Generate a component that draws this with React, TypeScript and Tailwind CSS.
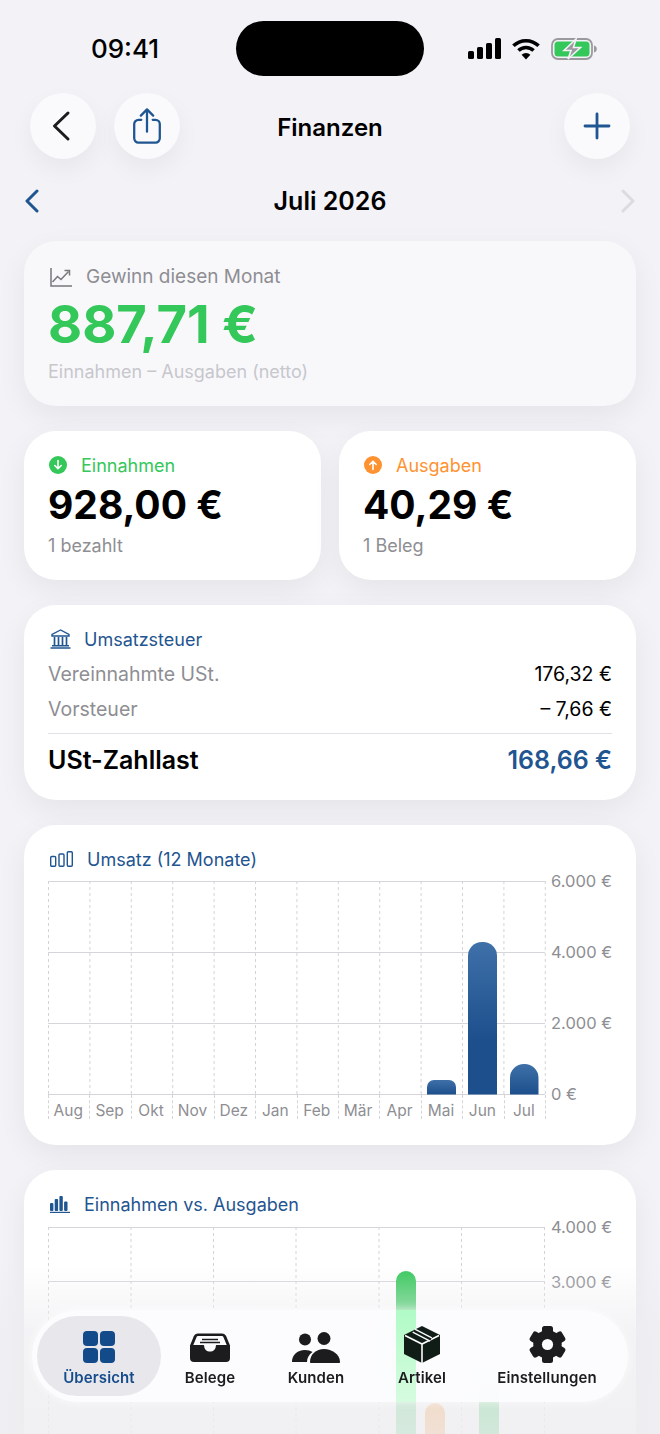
import type { ReactNode } from "react";

const months = ["Aug", "Sep", "Okt", "Nov", "Dez", "Jan", "Feb", "Mär", "Apr", "Mai", "Jun", "Jul"];

function roundedBar(x: number, w: number, top: number, bottom: number, r: number) {
  return `M${x} ${bottom}V${top + r}a${r} ${r} 0 0 1 ${r} ${-r}h${w - 2 * r}a${r} ${r} 0 0 1 ${r} ${r}V${bottom}Z`;
}

function Card({ children, className = "" }: { children: ReactNode; className?: string }) {
  return (
    <section className={`rounded-[32px] px-[24px] shadow-[0_10px_30px_rgba(0,0,0,0.06)] ${className}`}>
      {children}
    </section>
  );
}

function RoundButton({ children }: { children: ReactNode }) {
  return (
    <button className="flex h-[66px] w-[66px] items-center justify-center rounded-full bg-[#fafafd] shadow-[0_10px_24px_rgba(0,0,0,0.05)]">
      {children}
    </button>
  );
}

function StatusIcons() {
  return (
    <div className="flex items-center gap-[10px]">
      <svg width="33" height="21" viewBox="0 0 33 21" fill="#000">
        <rect x="0" y="13" width="6" height="8" rx="1.6" />
        <rect x="9" y="9" width="6" height="12" rx="1.6" />
        <rect x="18" y="5" width="6" height="16" rx="1.6" />
        <rect x="27" y="0" width="6" height="21" rx="1.6" />
      </svg>
      <svg width="30" height="22" viewBox="0 0 28 21" fill="none" stroke="#000" strokeWidth="3.4">
        <path d="M2 7.500a17 17 0 0 1 24 0" />
        <path d="M6.800 12a10.400 10.400 0 0 1 14.400 0" />
        <path d="M14 20.500l-4.200-4.400a6 6 0 0 1 8.400 0z" fill="#000" stroke="none" />
      </svg>
      <svg width="46" height="22" viewBox="0 0 46 22">
        <rect x="1" y="1" width="40" height="20" rx="6" fill="none" stroke="#9a9a9e" strokeWidth="1.800" />
        <rect x="3.500" y="3.500" width="35" height="15" rx="3.500" fill="#34c759" />
        <path d="M43 7.500c1.800.5 2.800 1.800 2.800 3.500s-1 3-2.800 3.500z" fill="#9a9a9e" />
        <path d="M25 1 13 12.500h7L17 21l12.500-11.500h-7z" fill="#9a9a9e" stroke="#f2f2f7" strokeWidth="1.600" />
      </svg>
    </div>
  );
}

function PlotLabels({ labels, rowClass }: { labels: string[]; rowClass: string }) {
  return (
    <div className={`ml-[5px] -mt-[12px] flex flex-col text-[16.5px] leading-[24px] text-[#8e8e93] ${rowClass}`}>
      {labels.map((l) => (
        <span key={l} className="whitespace-nowrap">
          {l}
        </span>
      ))}
    </div>
  );
}

function RevenueChart() {
  const cols = Array.from({ length: 13 }, (_, i) => 0.5 + i * 41.4);
  return (
    <div className="mt-[10px] flex">
      <div className="w-[498px] shrink-0">
        <svg width="498" height="214" className="block">
          <defs>
            <linearGradient id="rev" x1="0" y1="0" x2="0" y2="1">
              <stop offset="0" stopColor="#3f70a8" />
              <stop offset="0.65" stopColor="#1c4f8c" />
              <stop offset="1" stopColor="#1c4f8c" />
            </linearGradient>
            <linearGradient id="revS" x1="0" y1="0" x2="0" y2="1">
              <stop offset="0" stopColor="#3f70a8" />
              <stop offset="1" stopColor="#1c4f8c" />
            </linearGradient>
          </defs>
          {[0.5, 71.5, 142.5, 213.5].map((y) => (
            <line key={y} x1="0" x2="497" y1={y} y2={y} stroke="#d6d6da" />
          ))}
          {cols.map((x) => (
            <line key={x} x1={x} x2={x} y1="0" y2="213" stroke="#d4d4d8" strokeDasharray="3 3" />
          ))}
          <path d={roundedBar(379, 29, 199, 213.5, 7)} fill="url(#revS)" />
          <path d={roundedBar(420, 29, 61, 213.5, 14)} fill="url(#rev)" />
          <path d={roundedBar(462, 28.5, 183, 213.5, 14)} fill="url(#revS)" />
        </svg>
        <div className="grid grid-cols-12 border-r border-dashed border-[#d4d4d8]">
          {months.map((m) => (
            <div
              key={m}
              className="h-[24px] border-l border-dashed border-[#d4d4d8] pt-[4px] pr-[2px] text-center text-[15.5px] leading-[24px] text-[#8e8e93]"
            >
              {m}
            </div>
          ))}
        </div>
      </div>
      <PlotLabels labels={["6.000 €", "4.000 €", "2.000 €", "0 €"]} rowClass="h-[237px] justify-between" />
    </div>
  );
}

function CompareChart() {
  const cols = [0.5, 83, 165.5, 248, 331, 413.5, 496.5];
  return (
    <div className="mt-[11px] flex">
      <svg width="498" height="240" className="block shrink-0">
        <defs>
          <linearGradient id="inc" x1="0" y1="0" x2="0" y2="1">
            <stop offset="0" stopColor="#34c759" />
            <stop offset="1" stopColor="#5ad27d" />
          </linearGradient>
        </defs>
        {[0.5, 54.5, 109, 163.5, 218].map((y) => (
          <line key={y} x1="0" x2="497" y1={y} y2={y} stroke="#d6d6da" />
        ))}
        {cols.map((x) => (
          <line key={x} x1={x} x2={x} y1="0" y2="240" stroke="#d4d4d8" strokeDasharray="3 3" />
        ))}
        <path d={roundedBar(348, 20, 44, 240, 10)} fill="url(#inc)" />
        <path d={roundedBar(377, 20, 176, 240, 10)} fill="#ff9230" />
        <path d={roundedBar(431, 20, 150, 240, 10)} fill="#34c759" />
      </svg>
      <PlotLabels labels={["4.000 €", "3.000 €", "2.000 €"]} rowClass="gap-[30.5px]" />
    </div>
  );
}

function TabItem({
  label,
  width,
  active,
  children,
}: {
  label: string;
  width: string;
  active?: boolean;
  children: ReactNode;
}) {
  return (
    <div
      className={`relative z-10 flex flex-col items-center ${width} ${
        active ? "rounded-[40px] bg-[#e8e8ec] text-[#164c8b]" : "text-[#1c1c1e]"
      }`}
    >
      <div className="flex h-[49px] items-end justify-center pb-[2px]">{children}</div>
      <span className="mt-[3px] text-[15px] leading-[20px] font-semibold tracking-[0.1px] whitespace-nowrap">{label}</span>
    </div>
  );
}

function TabBar() {
  return (
    <nav className="absolute bottom-[32px] left-[32px] flex h-[92px] w-[596px] overflow-hidden rounded-[46px] bg-[#fcfcfe]/95 p-[5px] pt-[6px] shadow-[0_0_10px_rgba(255,255,255,0.7)] backdrop-blur-md">
      {/* green bar showing through the glass */}
      <div className="absolute inset-y-0 left-[364px] w-[20px] bg-gradient-to-b from-[#b0fbc6] to-[#d6fbe0]" />
      <TabItem label="Übersicht" width="w-[124px] h-[80px]" active>
        <svg width="32" height="32" viewBox="0 0 32 32" fill="#124a8a">
          <rect x="0" y="0" width="15" height="15" rx="4" />
          <rect x="17" y="0" width="15" height="15" rx="4" />
          <rect x="0" y="17" width="15" height="15" rx="4" />
          <rect x="17" y="17" width="15" height="15" rx="4" />
        </svg>
      </TabItem>
      <TabItem label="Belege" width="w-[98px]">
        <svg width="42" height="31" viewBox="0 0 42 31">
          <path
            d="M9 1.500h24c2 0 3.200.8 4.200 2.700l3.800 9.300v12.500a4 4 0 0 1-4 4H5a4 4 0 0 1-4-4V13.500l3.800-9.300C5.800 2.300 7 1.500 9 1.500z"
            fill="#1c1c1e"
          />
          <path
            d="M9.500 4h23c1 0 1.700.5 2.100 1.400l3.100 7.600H28c-.8 0-1.200.4-1.200 1.200 0 3-2.500 5.300-5.800 5.300s-5.800-2.300-5.800-5.300c0-.8-.4-1.200-1.200-1.200H4.300l3.100-7.600C7.800 4.500 8.500 4 9.500 4z"
            fill="#fcfcfe"
          />
          <path d="M13 7.500h16M11 10.500h20" stroke="#1c1c1e" strokeWidth="1.400" />
        </svg>
      </TabItem>
      <TabItem label="Kunden" width="w-[114px]">
        <svg width="48" height="31" viewBox="0 0 48 31" fill="#1c1c1e">
          <circle cx="13" cy="7.500" r="6" />
          <circle cx="32" cy="6.500" r="6.500" />
          <path d="M0 30c0-7 5-12 13-12 3 0 5.500.7 7.500 2-3.500 2.400-5.500 6-5.500 10z" />
          <path d="M18 30c0-7.500 6-13 14-13s16 5.500 16 13c0 .6-.4 1-1 1H19c-.6 0-1-.4-1-1z" />
        </svg>
      </TabItem>
      <TabItem label="Artikel" width="w-[98px]">
        <svg width="36" height="37" viewBox="0 0 36 37">
          <path d="M18 0 36 9v19L18 37 0 28V9z" fill="#101c16" />
          <path d="M1 9.500 18 18l17-8.500M18 18v19" stroke="#fcfcfe" strokeWidth="1.600" fill="none" />
          <path d="M9.500 4.500 27 13.500" stroke="#fcfcfe" strokeWidth="5" />
          <path d="M9.500 4.500 27 13.500" stroke="#101c16" strokeWidth="2.400" />
        </svg>
      </TabItem>
      <TabItem label="Einstellungen" width="w-[152px]">
        <svg width="37" height="37" viewBox="-18.500 -18.500 37 37">
          <g fill="#1c1c1e">
            {[0, 60, 120, 180, 240, 300].map((a) => (
              <rect key={a} x="-5.500" y="-18.500" width="11" height="12" rx="2.500" transform={`rotate(${a})`} />
            ))}
            <circle r="14.200" />
          </g>
          <circle r="5.600" fill="#fcfcfe" />
        </svg>
      </TabItem>
    </nav>
  );
}

export default function App() {
  return (
    <div className="relative h-[1434px] w-[660px] overflow-hidden bg-[#f2f2f7] font-['Inter',sans-serif] text-black">
      {/* Status bar */}
      <header className="grid h-[93px] grid-cols-[236px_188px_236px] pt-[21px]">
        <div className="pl-[14px] text-center text-[26px] leading-[55px] font-medium">09:41</div>
        <div className="h-[55px] rounded-[28px] bg-black" />
        <div className="flex h-[55px] items-center pl-[44px]">
          <StatusIcons />
        </div>
      </header>

      {/* Nav */}
      <div className="grid grid-cols-[150px_1fr_150px] items-center px-[30px]">
        <div className="flex gap-[18px]">
          <RoundButton>
            <svg width="20" height="32" viewBox="0 0 20 32" fill="none" stroke="#1c1c1e" strokeWidth="3" strokeLinecap="round" strokeLinejoin="round" className="mr-[4px]">
              <path d="M17 3 3.500 16 17 29" />
            </svg>
          </RoundButton>
          <RoundButton>
            <svg width="30" height="36" viewBox="0 0 30 38" fill="none" stroke="#1f5590" strokeWidth="2.400" strokeLinecap="round" strokeLinejoin="round">
              <path d="M9 12.500H6a4.500 4.500 0 0 0-4.500 4.500v15A4.500 4.500 0 0 0 6 36.500h18a4.500 4.500 0 0 0 4.500-4.500V17a4.500 4.500 0 0 0-4.500-4.500h-3" />
              <path d="M15 25V2M8.500 8 15 1.500 21.500 8" />
            </svg>
          </RoundButton>
        </div>
        <h1 className="pt-[3px] text-center text-[24px] font-semibold">Finanzen</h1>
        <div className="flex justify-end">
          <RoundButton>
            <svg width="28" height="28" viewBox="0 0 28 28" stroke="#1f5590" strokeWidth="2.800" strokeLinecap="round">
              <path d="M14 2v24M2 14h24" />
            </svg>
          </RoundButton>
        </div>
      </div>

      {/* Month switcher */}
      <div className="mt-[22px] flex h-[40px] items-center justify-between px-[25px]">
        <svg width="14" height="24" viewBox="0 0 14 24" fill="none" stroke="#1f5590" strokeWidth="3" strokeLinecap="round" strokeLinejoin="round">
          <path d="M12 2 2 12l10 10" />
        </svg>
        <div className="pt-[2px] text-[25px] font-semibold">Juli 2026</div>
        <svg width="14" height="24" viewBox="0 0 14 24" fill="none" stroke="#dcdce0" strokeWidth="3" strokeLinecap="round" strokeLinejoin="round">
          <path d="m2 2 10 10L2 22" />
        </svg>
      </div>

      <main className="mt-[20px] flex flex-col gap-[25px] px-[24px]">
        {/* Profit */}
        <Card className="bg-[#f8f8fb] pt-[24px] pb-[22px]">
          <div className="flex h-[24px] items-center gap-[14px] text-[19px] text-[#8e8e93]">
            <svg width="22" height="19" viewBox="0 0 22 19" fill="none" stroke="#77777c" strokeWidth="1.500" className="ml-[2px]">
              <path d="M1 0v18h21" />
              <path d="m2.500 14 5-5.500 3.500 3 7.500-8" />
              <path d="M14.500 2.500h5v5" />
            </svg>
            Gewinn diesen Monat
          </div>
          <div className="mt-[5px] text-[52.5px] leading-[60px] font-bold text-[#34c759]">887,71 €</div>
          <div className="mt-[6px] text-[18px] leading-[24px] text-[#c7c7cc]">Einnahmen – Ausgaben (netto)</div>
        </Card>

        {/* Income / expenses */}
        <div className="grid grid-cols-2 gap-[18px]">
          <Card className="bg-white pt-[22px] pb-[22px]">
            <div className="flex h-[24px] items-center gap-[14px] text-[18px] text-[#34c759]">
              <svg width="18" height="18" viewBox="0 0 18 18" className="ml-px">
                <circle cx="9" cy="9" r="9" fill="#34c759" />
                <path d="M9 4.500v8M5.800 9.500 9 12.800l3.200-3.300" stroke="#fff" strokeWidth="1.600" fill="none" strokeLinecap="round" strokeLinejoin="round" />
              </svg>
              Einnahmen
            </div>
            <div className="mt-[5px] text-[39px] leading-[46px] font-bold">928,00 €</div>
            <div className="mt-[6px] text-[18px] leading-[24px] text-[#8e8e93]">1 bezahlt</div>
          </Card>
          <Card className="bg-white pt-[22px] pb-[22px]">
            <div className="flex h-[24px] items-center gap-[14px] text-[18px] text-[#ff9230]">
              <svg width="18" height="18" viewBox="0 0 18 18" className="ml-px">
                <circle cx="9" cy="9" r="9" fill="#ff9230" />
                <path d="M9 13.500v-8M5.800 8.500 9 5.200l3.200 3.300" stroke="#fff" strokeWidth="1.600" fill="none" strokeLinecap="round" strokeLinejoin="round" />
              </svg>
              Ausgaben
            </div>
            <div className="mt-[5px] text-[39px] leading-[46px] font-bold">40,29 €</div>
            <div className="mt-[6px] text-[18px] leading-[24px] text-[#8e8e93]">1 Beleg</div>
          </Card>
        </div>

        {/* VAT */}
        <Card className="bg-white pt-[22px] pb-[23px]">
          <div className="flex h-[24px] items-center gap-[13px] text-[18px] text-[#1f5590]">
            <svg width="21" height="20" viewBox="0 0 21 20" fill="none" stroke="#1f5590" strokeWidth="1.400" className="ml-[2px]">
              <path d="M10.500 1 2 5.500V7h17V5.500z" />
              <path d="M4.500 8v8M8.500 8v8M12.500 8v8M16.500 8v8" strokeWidth="1.700" />
              <path d="M2 16.800h17M0.500 19h20" strokeWidth="1.600" />
            </svg>
            Umsatzsteuer
          </div>
          <div className="mt-[12px] flex h-[24px] items-center justify-between text-[19.5px]">
            <span className="text-[#8e8e93]">Vereinnahmte USt.</span>
            <span>176,32 €</span>
          </div>
          <div className="mt-[11px] flex h-[24px] items-center justify-between text-[19.5px]">
            <span className="text-[#8e8e93]">Vorsteuer</span>
            <span>– 7,66 €</span>
          </div>
          <div className="mt-[11px] h-px bg-[#e2e2e6]" />
          <div className="mt-[11px] flex h-[32px] items-center justify-between text-[25px] font-semibold">
            <span>USt-Zahllast</span>
            <span className="text-[#1f5590]">168,66 €</span>
          </div>
        </Card>

        {/* Revenue chart */}
        <Card className="bg-white pt-[22px] pb-[26px]">
          <div className="flex h-[24px] items-center gap-[14px] text-[18px] text-[#1f5590]">
            <svg width="23" height="16" viewBox="0 0 23 16" fill="none" stroke="#1f5590" strokeWidth="1.400" className="ml-[2px]">
              <rect x="0.700" y="5.500" width="5" height="9.800" rx="1" />
              <rect x="9" y="3" width="5" height="12.300" rx="1" />
              <rect x="17.300" y="0.700" width="5" height="14.600" rx="1" />
            </svg>
            Umsatz (12 Monate)
          </div>
          <RevenueChart />
        </Card>

        {/* Income vs expenses chart */}
        <Card className="bg-white pt-[22px]">
          <div className="flex h-[24px] items-center gap-[14px] text-[18px] text-[#1f5590]">
            <svg width="20" height="17" viewBox="0 0 20 17" fill="#1f5590" className="ml-[2px]">
              <rect x="0" y="7" width="3.400" height="8" rx="1" />
              <rect x="4.700" y="3" width="3.400" height="12" rx="1" />
              <rect x="9.400" y="0" width="3.400" height="15" rx="1" />
              <rect x="14.100" y="5.500" width="3.400" height="9.500" rx="1" />
              <rect x="0" y="15.800" width="20" height="1.200" />
            </svg>
            Einnahmen vs. Ausgaben
          </div>
          <CompareChart />
        </Card>
      </main>

      {/* scroll edge fade behind the tab bar */}
      <div className="pointer-events-none absolute inset-x-0 bottom-0 h-[170px] bg-gradient-to-b from-[#eeeef1]/0 via-[#eeeef1]/70 via-40% to-[#eeeef1]/85" />

      <TabBar />
    </div>
  );
}
